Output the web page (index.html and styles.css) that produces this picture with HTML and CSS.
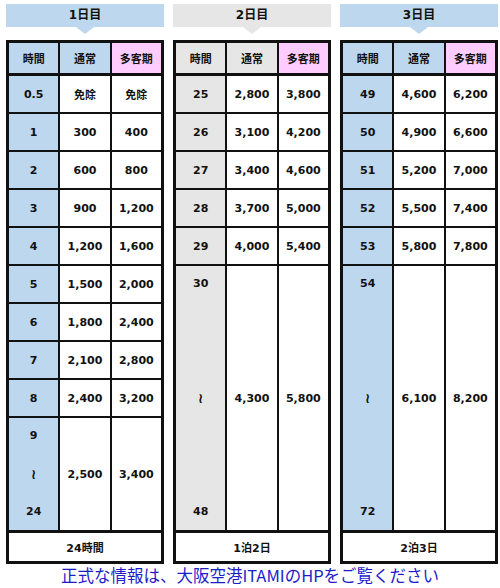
FILE: index.html
```html
<!DOCTYPE html>
<html lang="ja">
<head>
<meta charset="utf-8">
<link rel="stylesheet" href="styles.css">
</head>
<body>
<div class="page">
  <div class="panels">
    <section class="panel blue">
      <div class="banner">1日目</div>
      <div class="grid">
        <div class="c key">時間</div><div class="c key">通常</div><div class="c peak">多客期</div>
        <div class="c t">0.5</div><div class="c">免除</div><div class="c">免除</div>
        <div class="c t">1</div><div class="c">300</div><div class="c">400</div>
        <div class="c t">2</div><div class="c">600</div><div class="c">800</div>
        <div class="c t">3</div><div class="c">900</div><div class="c">1,200</div>
        <div class="c t">4</div><div class="c">1,200</div><div class="c">1,600</div>
        <div class="c t">5</div><div class="c">1,500</div><div class="c">2,000</div>
        <div class="c t">6</div><div class="c">1,800</div><div class="c">2,400</div>
        <div class="c t">7</div><div class="c">2,100</div><div class="c">2,800</div>
        <div class="c t">8</div><div class="c">2,400</div><div class="c">3,200</div>
        <div class="c t range span3"><span>9</span><span class="wave">≀</span><span>24</span></div>
        <div class="c span3">2,500</div><div class="c span3">3,400</div>
        <div class="c foot">24時間</div>
      </div>
    </section>
    <section class="panel gray">
      <div class="banner">2日目</div>
      <div class="grid">
        <div class="c key">時間</div><div class="c key">通常</div><div class="c peak">多客期</div>
        <div class="c t">25</div><div class="c">2,800</div><div class="c">3,800</div>
        <div class="c t">26</div><div class="c">3,100</div><div class="c">4,200</div>
        <div class="c t">27</div><div class="c">3,400</div><div class="c">4,600</div>
        <div class="c t">28</div><div class="c">3,700</div><div class="c">5,000</div>
        <div class="c t">29</div><div class="c">4,000</div><div class="c">5,400</div>
        <div class="c t range span7"><span>30</span><span class="wave">≀</span><span>48</span></div>
        <div class="c span7">4,300</div><div class="c span7">5,800</div>
        <div class="c foot">1泊2日</div>
      </div>
    </section>
    <section class="panel blue">
      <div class="banner">3日目</div>
      <div class="grid">
        <div class="c key">時間</div><div class="c key">通常</div><div class="c peak">多客期</div>
        <div class="c t">49</div><div class="c">4,600</div><div class="c">6,200</div>
        <div class="c t">50</div><div class="c">4,900</div><div class="c">6,600</div>
        <div class="c t">51</div><div class="c">5,200</div><div class="c">7,000</div>
        <div class="c t">52</div><div class="c">5,500</div><div class="c">7,400</div>
        <div class="c t">53</div><div class="c">5,800</div><div class="c">7,800</div>
        <div class="c t range span7"><span>54</span><span class="wave">≀</span><span>72</span></div>
        <div class="c span7">6,100</div><div class="c span7">8,200</div>
        <div class="c foot">2泊3日</div>
      </div>
    </section>
  </div>
  <p class="note">正式な情報は、大阪空港ITAMIのHPをご覧ください</p>
</div>
</body>
</html>
```

FILE: styles.css
```css
* { box-sizing: border-box; }
html, body { margin: 0; padding: 0; background: #ffffff; }
body {
  font-family: "DejaVu Sans", "Noto Sans CJK JP", sans-serif;
  color: #111;
}
.page {
  width: 500px;
  height: 588px;
  padding: 4px 0 0 6px;
}
.panels {
  display: flex;
  gap: 9px;
}
.panel {
  width: 158px;
  display: flex;
  flex-direction: column;
}
.banner {
  position: relative;
  height: 23px;
  line-height: 23px;
  text-align: center;
  font-weight: bold;
  font-size: 12px;
  margin-bottom: 13px;
}
.banner::after {
  content: "";
  position: absolute;
  left: 50%;
  top: 23px;
  margin-left: -9px;
  border-left: 9px solid transparent;
  border-right: 9px solid transparent;
  border-top: 7px solid transparent;
}
.blue .banner { background: #bdd7ee; }
.blue .banner::after { border-top-color: #bdd7ee; }
.gray .banner { background: #e6e6e6; }
.gray .banner::after { border-top-color: #e6e6e6; }

.grid {
  display: grid;
  grid-template-columns: 1fr 1fr 1fr;
  grid-template-rows: 31px repeat(12, 36px) 29px;
  gap: 2px;
  padding: 3px;
  background: #111;
}
.c {
  background: #ffffff;
  display: flex;
  align-items: center;
  justify-content: center;
  font-weight: bold;
  font-size: 11px;
}
.blue .key, .blue .t { background: #bdd7ee; }
.gray .key, .gray .t { background: #e7e6e6; }
.key, .peak { margin-bottom: 1px; }
.peak { background: #ffccff; }
.span3 { grid-row: span 3; }
.span7 { grid-row: span 7; }
.range {
  flex-direction: column;
  justify-content: space-between;
  padding: 11px 0;
  line-height: 14px;
}
.wave { font-size: 14px; font-weight: bold; }
.foot {
  grid-column: span 3;
  margin-top: 1px;
}
.note {
  margin: 2px 0 0 -6px;
  text-align: center;
  font-family: "Noto Sans CJK JP", sans-serif;
  font-size: 16.5px;
  line-height: 19px;
  color: #1c1cc9;
}
```
